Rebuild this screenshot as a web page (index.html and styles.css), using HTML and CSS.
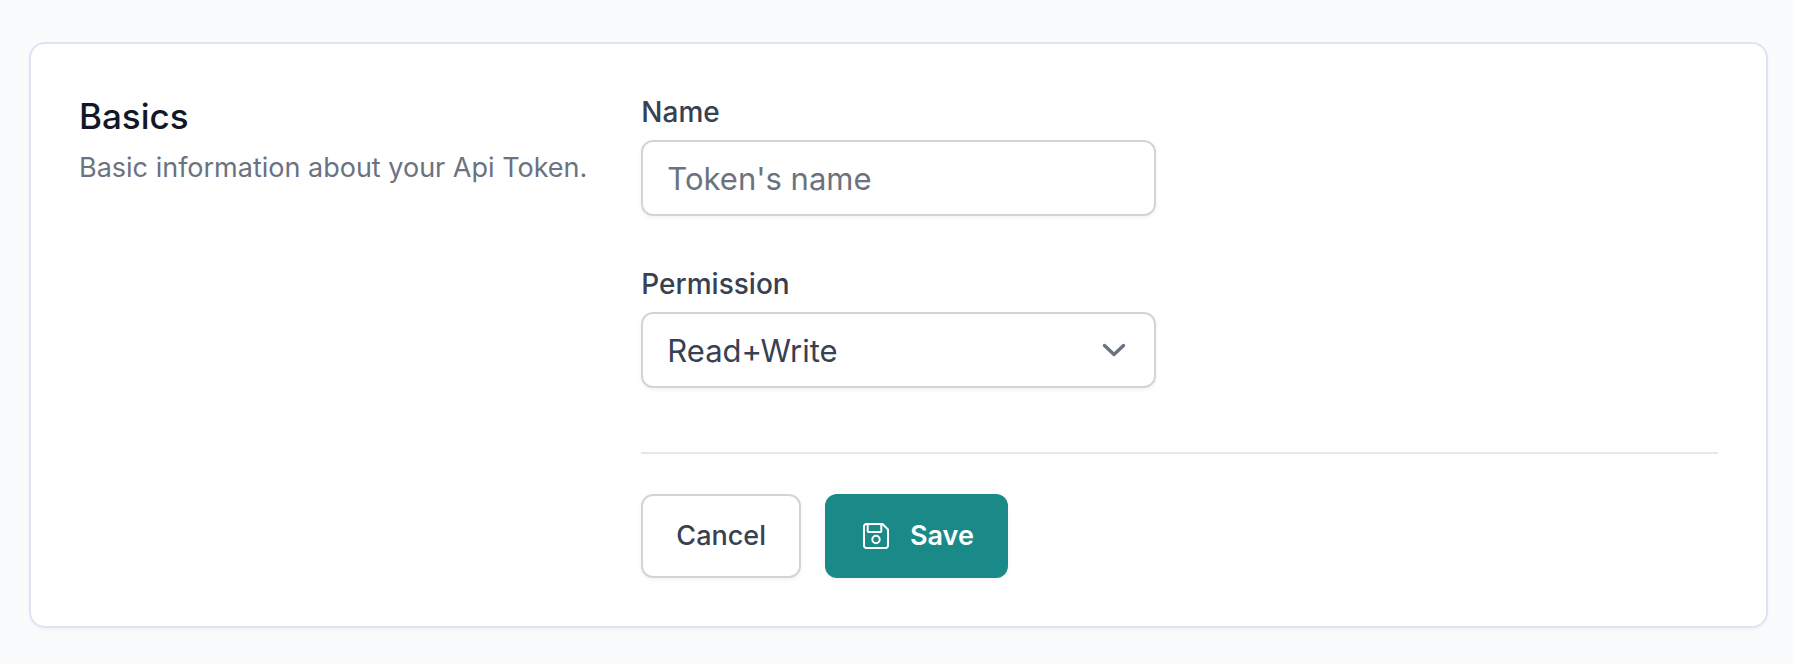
FILE: index.html
```html
<!DOCTYPE html>
<html lang="en">
<head>
<meta charset="utf-8">
<meta name="viewport" content="width=device-width, initial-scale=1">
<title>Api Token</title>
<link rel="stylesheet" href="styles.css">
</head>
<body>
<main class="page">
  <form class="card">
    <header class="intro">
      <h2 class="intro-title">Basics</h2>
      <p class="intro-text">Basic information about your Api Token.</p>
    </header>
    <div class="content">
      <div class="fields">
        <div class="field">
          <label class="label" for="name">Name</label>
          <input class="control" id="name" type="text" placeholder="Token's name">
        </div>
        <div class="field">
          <label class="label" for="permission">Permission</label>
          <div class="select-wrap">
            <select class="control select" id="permission">
              <option>Read+Write</option>
              <option>Read</option>
            </select>
            <svg class="chevron" viewBox="0 0 24 16" aria-hidden="true"><path d="M2.500 3.500 12 12.500l9.500-9"/></svg>
          </div>
        </div>
      </div>
      <div class="actions">
        <button class="button button-plain" type="button">Cancel</button>
        <button class="button button-primary" type="submit">
          <svg class="save-icon" viewBox="0 0 26 26" aria-hidden="true">
            <path d="M3.300 1H19.500L25 6.500V22.700A2.300 2.300 0 0 1 22.700 25H3.300A2.300 2.300 0 0 1 1 22.700V3.300A2.300 2.300 0 0 1 3.300 1Z"/>
            <path d="M4.700 1V8.200A.8.8 0 0 0 5.500 9H17.500A.8.8 0 0 0 18.300 8.200V1"/>
            <circle cx="13" cy="16.500" r="3.700"/>
          </svg>
          Save
        </button>
      </div>
    </div>
  </form>
</main>
</body>
</html>
```
FILE: styles.css
```css
* {
  box-sizing: border-box;
}

body {
  margin: 0;
  background: #fafbfd;
  color: #374151;
  font-family: Inter, "Liberation Sans", sans-serif;
}

.page {
  padding: 42px 26px 36px 29px;
}

.card {
  display: grid;
  grid-template-columns: repeat(3, minmax(0, 1fr));
  gap: 48px;
  padding: 48px;
  background: #fff;
  border: 2px solid #e2e2f6;
  border-radius: 16px;
  box-shadow: 0 2px 4px rgba(0, 0, 0, 0.04);
}

.intro-title {
  margin: 0;
  color: #111827;
  font-size: 35px;
  font-weight: 500;
  line-height: 48px;
}

.intro-text {
  margin: 8px 0 0;
  color: #6b7280;
  font-size: 27px;
  line-height: 40px;
}

.content {
  grid-column: span 2;
}

.fields {
  display: grid;
  gap: 48px;
  width: calc(50% - 24px);
}

.field {
  display: grid;
  gap: 8px;
}

.label {
  font-size: 28px;
  font-weight: 500;
  line-height: 40px;
}

.control {
  display: block;
  width: 100%;
  height: 76px;
  padding: 0 24px;
  background: #fff;
  border: 2px solid #d1d5db;
  border-radius: 12px;
  box-shadow: 0 2px 4px rgba(0, 0, 0, 0.05);
  color: #374151;
  font-family: inherit;
  font-size: 31px;
}

.control::placeholder {
  color: #6b7280;
  opacity: 1;
}

.select-wrap {
  display: grid;
  align-items: center;
}

.select {
  grid-area: 1 / 1;
  appearance: none;
}

.chevron {
  grid-area: 1 / 1;
  justify-self: end;
  width: 24px;
  height: 16px;
  margin-right: 30px;
  fill: none;
  stroke: #6b7280;
  stroke-width: 3.4;
  stroke-linecap: round;
  stroke-linejoin: round;
  pointer-events: none;
}

.actions {
  display: flex;
  gap: 24px;
  margin-top: 64px;
  padding-top: 40px;
  border-top: 2px solid #e5e7eb;
}

.button {
  display: flex;
  align-items: center;
  gap: 21px;
  height: 84px;
  border: 2px solid transparent;
  border-radius: 12px;
  box-shadow: 0 2px 4px rgba(0, 0, 0, 0.05);
  font-family: inherit;
  font-size: 27px;
  font-weight: 500;
  line-height: 40px;
}

.button-plain {
  padding: 0 33px;
  background: #fff;
  border-color: #d1d5db;
  color: #374151;
}

.button-primary {
  padding: 0 32px 0 36px;
  background: #198a88;
  color: #fff;
  font-weight: 600;
}

.save-icon {
  width: 26px;
  height: 26px;
  fill: none;
  stroke: currentColor;
  stroke-width: 2;
  stroke-linejoin: round;
}
```
